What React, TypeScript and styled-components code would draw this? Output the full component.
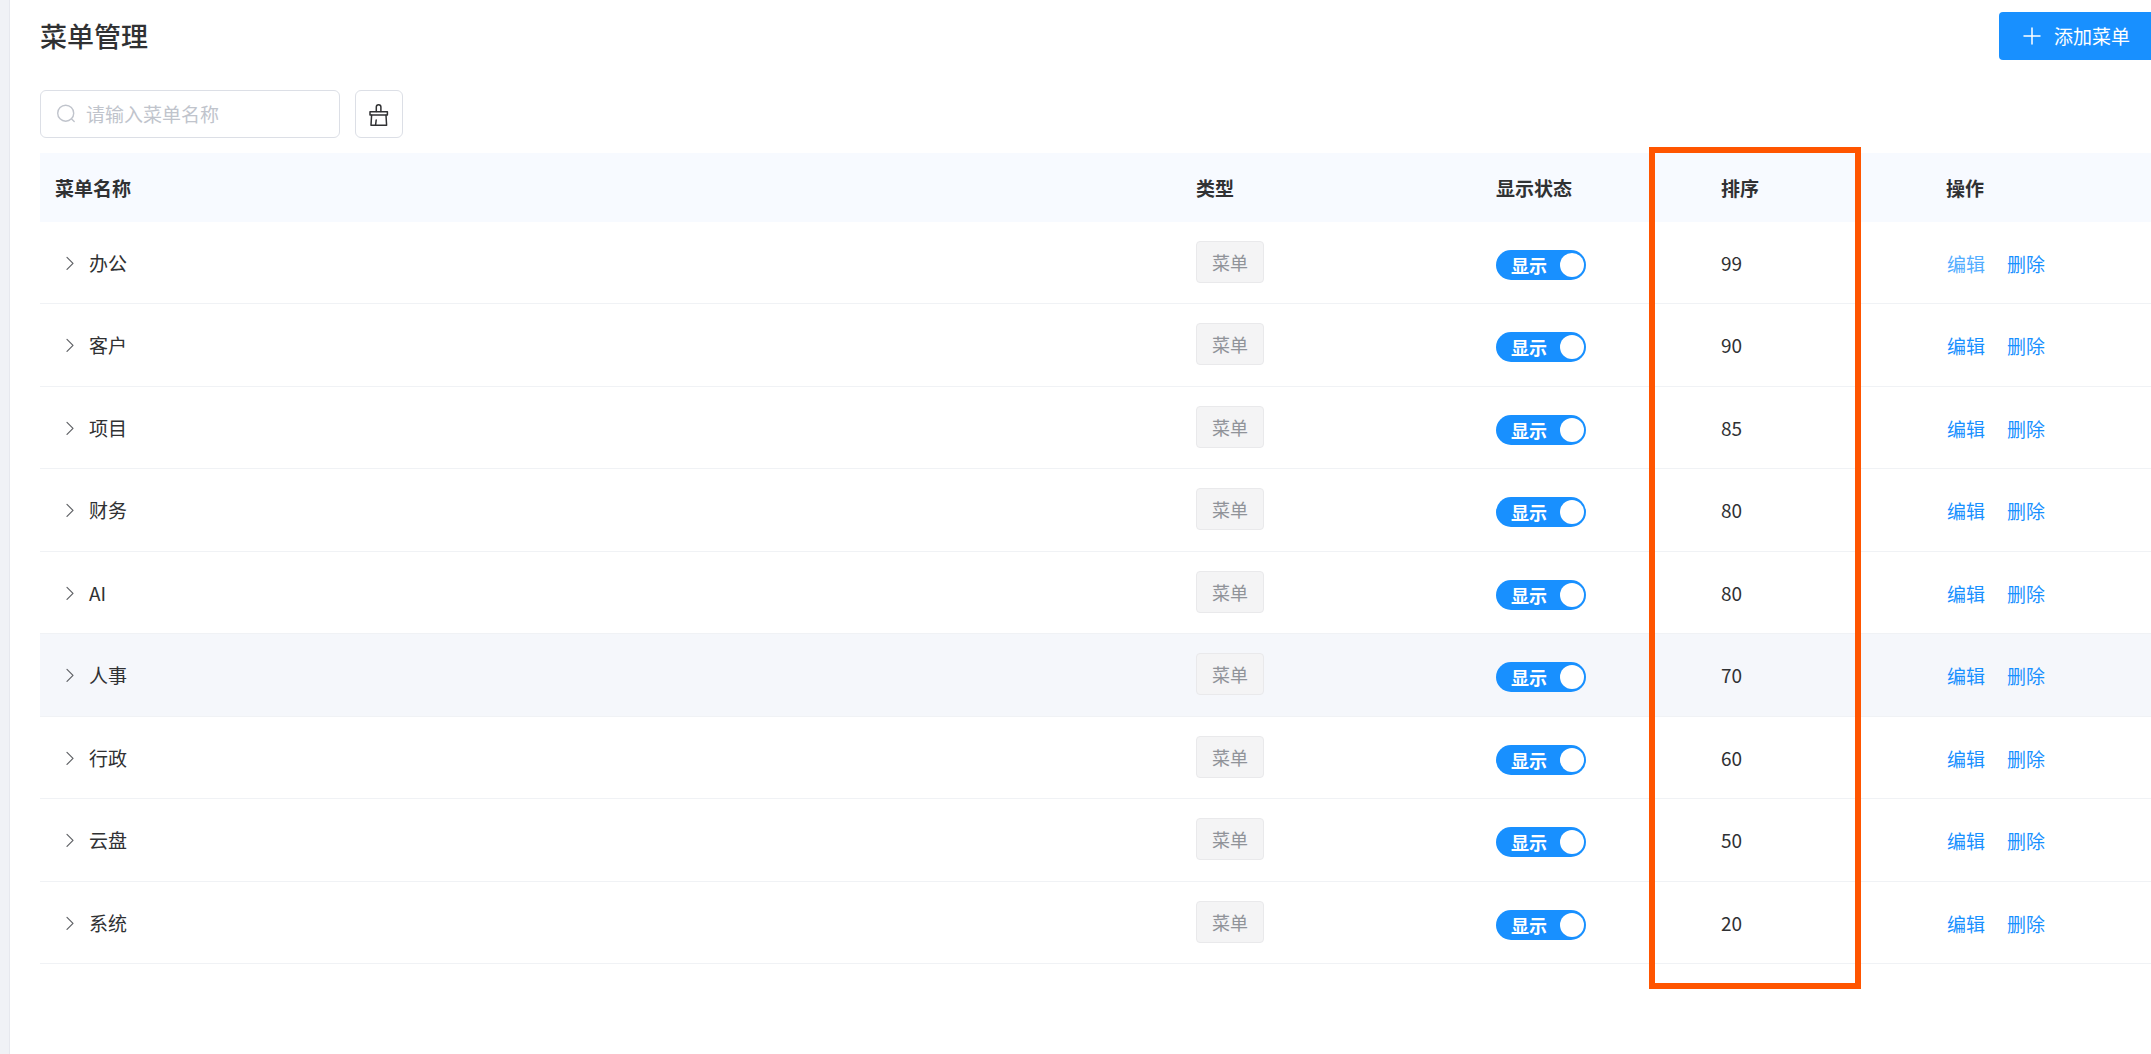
import React, { useState } from "react";
import styled, { createGlobalStyle } from "styled-components";

const GlobalStyle = createGlobalStyle`
  *, *::before, *::after { box-sizing: border-box; }
  html, body, #root { margin: 0; min-height: 100vh; }
  body {
    background: #f0f2f6;
    color: #303133;
    font-family: "Noto Sans CJK SC", sans-serif;
    font-size: 19px;
    line-height: 30px;
    overflow-x: hidden;
  }
  button, input { font: inherit; color: inherit; }
`;

const Page = styled.main`
  min-height: 100vh;
  margin-left: 9px;
  padding: 12px 0 64px 30px;
  border-left: 1px solid #e6e8ee;
  background: #fff;
`;

const Header = styled.header`
  display: flex;
  align-items: center;
  justify-content: space-between;
  height: 48px;
`;

const Title = styled.h1`
  margin: 0;
  font-size: 27px;
  line-height: 48px;
  font-weight: 500;
`;

const AddButton = styled.button`
  display: flex;
  align-items: center;
  gap: 13px;
  height: 48px;
  padding: 0 21px 0 24px;
  border: 0;
  border-radius: 4px 0 0 4px;
  background: #1890ff;
  color: #fff;
  cursor: pointer;
`;

const Toolbar = styled.div`
  display: flex;
  gap: 15px;
  margin: 30px 0 15px;
`;

const SearchBox = styled.label`
  display: flex;
  align-items: center;
  gap: 10px;
  width: 300px;
  height: 48px;
  padding: 0 15px;
  border: 1px solid #dcdfe6;
  border-radius: 6px;
  color: #c0c4cc;
`;

const SearchInput = styled.input`
  flex: 1;
  min-width: 0;
  padding: 0;
  border: 0;
  outline: 0;
  background: none;
  color: #303133;
  &::placeholder { color: #c0c4cc; opacity: 1; }
`;

const IconButton = styled.button`
  display: grid;
  place-items: center;
  width: 48px;
  height: 48px;
  padding: 0;
  border: 1px solid #dcdfe6;
  border-radius: 6px;
  background: #fff;
  cursor: pointer;
`;

const TableArea = styled.section`
  position: relative;
`;

const Table = styled.table`
  width: 100%;
  table-layout: fixed;
  border-collapse: separate;
  border-spacing: 0;
`;

const HeadCell = styled.th<{ $width?: number }>`
  width: ${(p) => (p.$width ? `${p.$width}px` : "auto")};
  height: 69px;
  padding: 0 15px;
  background: #f7faff;
  text-align: left;
  font-weight: 700;
`;

const Row = styled.tr<{ $active: boolean }>`
  height: 82px;
  background: ${(p) => (p.$active ? "#f5f7fb" : "#fff")};
  &:nth-child(even) { height: 83px; }
`;

const Cell = styled.td`
  padding: 0 15px;
  border-bottom: 1px solid #f0f2f5;
  vertical-align: middle;
`;

const NameGroup = styled.div`
  display: flex;
  align-items: center;
  gap: 12px;
  padding-left: 7px;
`;

const ExpandButton = styled.button`
  display: grid;
  place-items: center;
  width: 15px;
  height: 30px;
  padding: 0;
  border: 0;
  background: none;
  color: #606266;
  cursor: pointer;
`;

const Tag = styled.span`
  display: flex;
  align-items: center;
  justify-content: center;
  width: 68px;
  height: 42px;
  margin-bottom: 2px;
  border: 1px solid #e9e9eb;
  border-radius: 4px;
  background: #f4f4f5;
  color: #909399;
  font-size: 18px;
`;

const Switch = styled.label`
  display: flex;
  align-items: center;
  justify-content: space-between;
  width: 90px;
  height: 30px;
  margin-top: 4px;
  padding: 0 2px 0 15px;
  border-radius: 15px;
  background: #1890ff;
  color: #fff;
  font-size: 18px;
  font-weight: 700;
  cursor: pointer;
  &:has(input:not(:checked)) { background: #c0c4cc; }
`;

const Knob = styled.input`
  appearance: none;
  width: 24px;
  height: 24px;
  margin: 0;
  border-radius: 50%;
  background: #fff;
  cursor: pointer;
`;

const Actions = styled.div`
  display: flex;
  gap: 22px;
  padding: 2px 0 0 1px;
`;

const ActionLink = styled.a<{ $hovered?: boolean }>`
  color: ${(p) => (p.$hovered ? "#53adff" : "#1890ff")};
  text-decoration: none;
`;

const ColumnHighlight = styled.div`
  position: absolute;
  top: -6px;
  right: 290px;
  bottom: -25px;
  width: 212px;
  border: 6px solid #ff5500;
  pointer-events: none;
`;

const PlusIcon = () => (
  <svg width="18" height="18" viewBox="0 0 18 18" fill="none" stroke="currentColor" strokeWidth="1.5" strokeLinecap="round" aria-hidden>
    <path d="M9 1v16M1 9h16" />
  </svg>
);

const SearchIcon = () => (
  <svg width="20" height="20" viewBox="0 0 20 20" fill="none" stroke="currentColor" strokeWidth="1.4" strokeLinecap="round" aria-hidden>
    <circle cx="9.7" cy="9.2" r="8" />
    <path d="m15.6 15 2.6 2.6" />
  </svg>
);

const BrushIcon = () => (
  <svg width="20" height="24" viewBox="0 0 20 24" fill="none" stroke="currentColor" strokeWidth="1.5" strokeLinejoin="round" strokeLinecap="round" aria-hidden>
    <path d="M7.3 9.6V5a2.3 2.3 0 0 1 4.6 0v4.6" />
    <path d="M1 9.8h17.4v3.2H1z" />
    <path d="M2.6 13.2 2 23.2h15.6L17 13.2" />
    <path d="M7.2 18 6.6 23" />
  </svg>
);

const ChevronIcon = () => (
  <svg width="10" height="16" viewBox="0 0 10 16" fill="none" stroke="currentColor" strokeWidth="1.2" strokeLinecap="round" strokeLinejoin="round" aria-hidden>
    <path d="m2 2.4 6 6-6 6" />
  </svg>
);

const menus = [
  { name: "办公", sort: 99 },
  { name: "客户", sort: 90 },
  { name: "项目", sort: 85 },
  { name: "财务", sort: 80 },
  { name: "AI", sort: 80 },
  { name: "人事", sort: 70 },
  { name: "行政", sort: 60 },
  { name: "云盘", sort: 50 },
  { name: "系统", sort: 20 },
];

export default function App() {
  const [keyword, setKeyword] = useState("");
  return (
    <>
      <GlobalStyle />
      <Page>
        <Header>
          <Title>菜单管理</Title>
          <AddButton type="button">
            <PlusIcon />
            添加菜单
          </AddButton>
        </Header>
        <Toolbar>
          <SearchBox>
            <SearchIcon />
            <SearchInput
              aria-label="菜单名称"
              placeholder="请输入菜单名称"
              value={keyword}
              onChange={(e) => setKeyword(e.target.value)}
            />
          </SearchBox>
          <IconButton type="button" aria-label="清空" onClick={() => setKeyword("")}>
            <BrushIcon />
          </IconButton>
        </Toolbar>
        <TableArea>
          <Table>
            <thead>
              <tr>
                <HeadCell>菜单名称</HeadCell>
                <HeadCell $width={300}>类型</HeadCell>
                <HeadCell $width={225}>显示状态</HeadCell>
                <HeadCell $width={225}>排序</HeadCell>
                <HeadCell $width={220}>操作</HeadCell>
              </tr>
            </thead>
            <tbody>
              {menus.map((menu, index) => (
                <Row key={menu.name} $active={menu.name === "人事"}>
                  <Cell>
                    <NameGroup>
                      <ExpandButton type="button" aria-label="展开">
                        <ChevronIcon />
                      </ExpandButton>
                      {menu.name}
                    </NameGroup>
                  </Cell>
                  <Cell>
                    <Tag>菜单</Tag>
                  </Cell>
                  <Cell>
                    <Switch>
                      显示
                      <Knob type="checkbox" defaultChecked />
                    </Switch>
                  </Cell>
                  <Cell>{menu.sort}</Cell>
                  <Cell>
                    <Actions>
                      <ActionLink href="#edit" $hovered={index === 0}>编辑</ActionLink>
                      <ActionLink href="#delete">删除</ActionLink>
                    </Actions>
                  </Cell>
                </Row>
              ))}
            </tbody>
          </Table>
          <ColumnHighlight />
        </TableArea>
      </Page>
    </>
  );
}
